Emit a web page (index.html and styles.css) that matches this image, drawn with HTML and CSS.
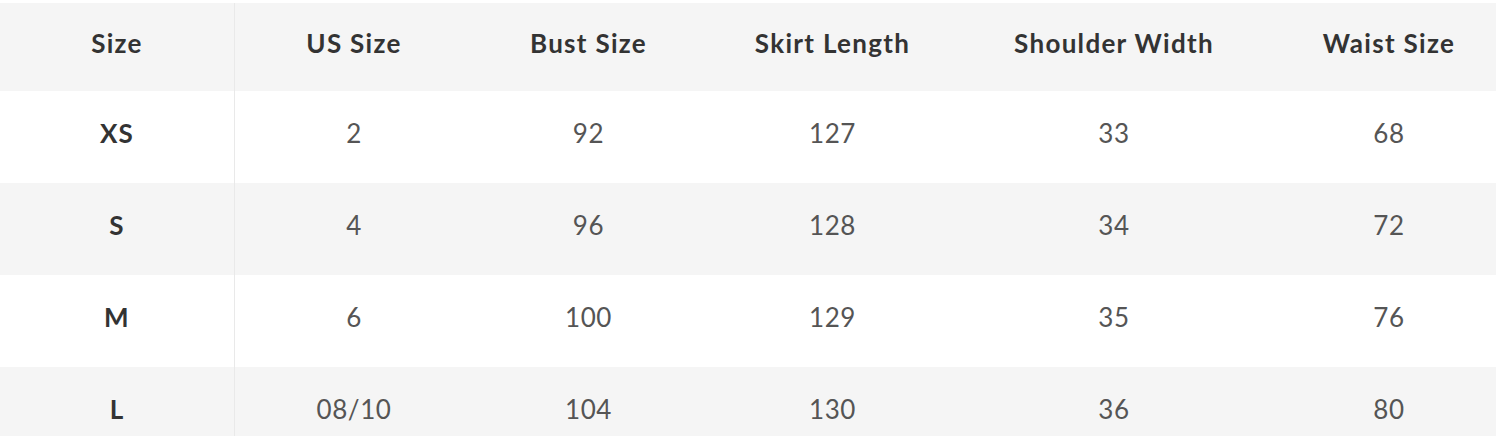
FILE: index.html
```html
<!DOCTYPE html>
<html>
<head>
<meta charset="utf-8">
<link rel="stylesheet" href="styles.css">
</head>
<body>
<div class="frame">
  <div class="table">
    <div class="row head">
      <div class="cell first">Size</div>
      <div class="cell">US Size</div>
      <div class="cell">Bust Size</div>
      <div class="cell">Skirt Length</div>
      <div class="cell">Shoulder Width</div>
      <div class="cell">Waist Size</div>
    </div>
    <div class="row white">
      <div class="cell first">XS</div>
      <div class="cell">2</div>
      <div class="cell">92</div>
      <div class="cell">127</div>
      <div class="cell">33</div>
      <div class="cell">68</div>
    </div>
    <div class="row gray">
      <div class="cell first">S</div>
      <div class="cell">4</div>
      <div class="cell">96</div>
      <div class="cell">128</div>
      <div class="cell">34</div>
      <div class="cell">72</div>
    </div>
    <div class="row white">
      <div class="cell first">M</div>
      <div class="cell">6</div>
      <div class="cell">100</div>
      <div class="cell">129</div>
      <div class="cell">35</div>
      <div class="cell">76</div>
    </div>
    <div class="row gray">
      <div class="cell first">L</div>
      <div class="cell">08/10</div>
      <div class="cell">104</div>
      <div class="cell">130</div>
      <div class="cell">36</div>
      <div class="cell">80</div>
    </div>
  </div>
</div>
</body>
</html>
```
FILE: styles.css
```css
html, body {
  margin: 0;
  padding: 0;
  background: #ffffff;
}
body {
  padding-top: 3px;
  font-family: Lato, "Open Sans", sans-serif;
}
.frame {
  width: 1496px;
  height: 433px;
  overflow: hidden;
}
.table {
  width: 1511px;
  display: flex;
  flex-direction: column;
}
.row {
  display: grid;
  grid-template-columns: 235px 238px 231px 257px 306px 244px;
  height: 92px;
}
.row.head {
  height: 88px;
  background: #f5f5f5;
}
.row.gray {
  background: #f5f5f5;
}
.row.white {
  background: #ffffff;
}
.cell {
  display: flex;
  align-items: center;
  justify-content: center;
  font-size: 26px;
  letter-spacing: 0.6px;
  color: #555555;
  padding-bottom: 8px;
  box-sizing: border-box;
}
.cell.first {
  border-right: 1px solid #e9e9e9;
  font-weight: 700;
  color: #333333;
  letter-spacing: 1.2px;
}
.head .cell {
  font-weight: 700;
  color: #333333;
  letter-spacing: 1.3px;
}
```
